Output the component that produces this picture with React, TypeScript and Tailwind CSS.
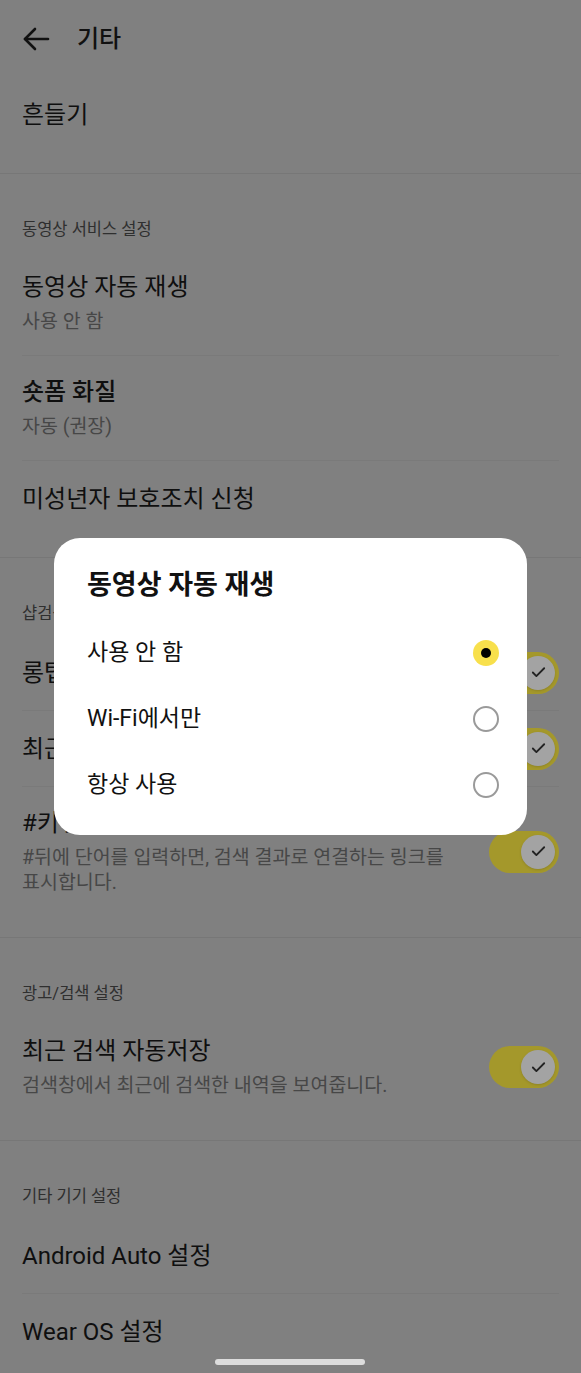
import { Check } from "lucide-react";

type Item = {
  title: string;
  sub?: string;
  toggle?: boolean;
  bold?: boolean;
};

type Section = {
  header?: string;
  items: Item[];
};

const sections: Section[] = [
  { items: [{ title: "흔들기" }] },
  {
    header: "동영상 서비스 설정",
    items: [
      { title: "동영상 자동 재생", sub: "사용 안 함" },
      { title: "숏폼 화질", sub: "자동 (권장)", bold: true },
      { title: "미성년자 보호조치 신청" },
    ],
  },
  {
    header: "샵검색 설정",
    items: [
      { title: "롱탭 검색", toggle: true },
      { title: "최근 검색어 표시", toggle: true },
      {
        title: "#키워드 링크",
        sub: "#뒤에 단어를 입력하면, 검색 결과로 연결하는 링크를 표시합니다.",
        toggle: true,
      },
    ],
  },
  {
    header: "광고/검색 설정",
    items: [
      {
        title: "최근 검색 자동저장",
        sub: "검색창에서 최근에 검색한 내역을 보여줍니다.",
        toggle: true,
      },
    ],
  },
  {
    header: "기타 기기 설정",
    items: [{ title: "Android Auto 설정" }, { title: "Wear OS 설정" }],
  },
];

const options = ["사용 안 함", "Wi-Fi에서만", "항상 사용"];

const Toggle = () => (
  <div className="flex h-[42px] w-[70px] shrink-0 items-center justify-end rounded-full bg-[#a4982b] pr-[4px]">
    <div className="flex h-[34px] w-[34px] items-center justify-center rounded-full bg-[#a3a3a3] shadow-sm">
      <Check size={17} strokeWidth={2.6} className="text-[#222]" />
    </div>
  </div>
);

const Row = ({ item }: { item: Item }) => {
  const twoLine = !!item.sub;
  return (
    <div
      className={`flex items-center gap-4 px-[22px] ${
        twoLine ? "py-[21px]" : "h-[75px]"
      }`}
    >
      <div className="min-w-0 flex-1">
        <div
          className={`text-[24px] leading-[30px] text-[#0f0f0f] ${
            item.bold ? "font-medium" : ""
          }`}
        >
          {item.title}
        </div>
        {item.sub && (
          <div className="mt-[7px] break-keep pr-4 text-[19.5px] leading-[25px] text-[#474747]">
            {item.sub}
          </div>
        )}
      </div>
      {item.toggle && <Toggle />}
    </div>
  );
};

export default function App() {
  return (
    <div className="relative min-h-[1373px] w-full overflow-hidden bg-[#808080] font-[Roboto,'Noto_Sans_CJK_KR',sans-serif]">
      {/* header */}
      <div className="flex h-[77px] items-center px-[22px]">
        <svg width="28" height="24" viewBox="0 0 28 24" fill="none" stroke="#111" strokeWidth="2.6" strokeLinecap="round" strokeLinejoin="round">
          <path d="M26 12H3" />
          <path d="M13 2L3 12l10 10" />
        </svg>
        <span className="ml-[27px] text-[24px] font-medium text-[#111]">기타</span>
      </div>

      {sections.map((s, si) => (
        <div
          key={si}
          className={`pb-[21px] ${si < sections.length - 1 ? "border-b border-[#777]" : ""}`}
        >
          {s.header && (
            <div className="px-[22px] pb-[10px] pt-[45px] text-[16.5px] leading-[22px] text-[#2f2f2f]">
              {s.header}
            </div>
          )}
          {s.items.map((item, ii) => (
            <div key={ii}>
              {ii > 0 && <div className="mx-[22px] h-px bg-[#7a7a7a]" />}
              <Row item={item} />
            </div>
          ))}
        </div>
      ))}

      {/* dialog */}
      <div className="absolute left-[54px] top-[538px] w-[473px] rounded-[26px] bg-white pb-[17px] pl-[33px] pr-[28px] pt-[30px]">
        <div className="text-[27px] font-bold leading-[34px] text-[#111]">동영상 자동 재생</div>
        <div className="mt-[18px]">
          {options.map((o, i) => (
            <div key={o} className="flex h-[66px] items-center justify-between">
              <span className="text-[23px] text-[#111]">{o}</span>
              {i === 0 ? (
                <div className="flex h-[26px] w-[26px] items-center justify-center rounded-full bg-[#f8e04c]">
                  <div className="h-[10px] w-[10px] rounded-full bg-black" />
                </div>
              ) : (
                <div className="h-[26px] w-[26px] rounded-full border-2 border-[#9a9a9a]" />
              )}
            </div>
          ))}
        </div>
      </div>

      {/* home indicator */}
      <div className="absolute left-[215px] top-[1359px] h-[6px] w-[150px] rounded-full bg-[#dcdcdc]" />
    </div>
  );
}
